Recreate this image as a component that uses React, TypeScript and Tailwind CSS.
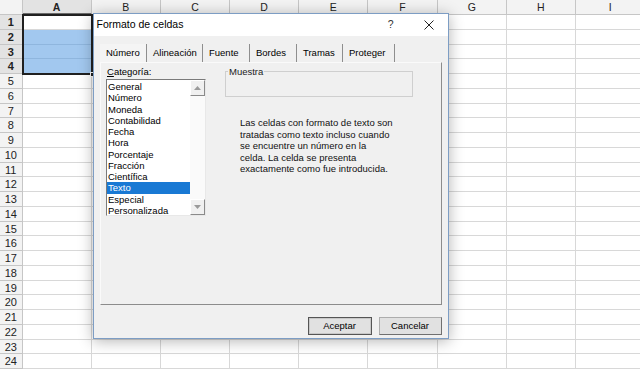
import React from 'react';

const COLS = ['A', 'B', 'C', 'D', 'E', 'F', 'G', 'H', 'I'];
const ROWS = Array.from({ length: 24 }, (_, i) => i + 1);

const CATEGORIES = [
    'General', 'Número', 'Moneda', 'Contabilidad', 'Fecha', 'Hora',
    'Porcentaje', 'Fracción', 'Científica', 'Texto', 'Especial', 'Personalizada'
];

const TABS = [
    { label: 'Número', w: 'w-[47px]' },
    { label: 'Alineación', w: 'w-[56px]' },
    { label: 'Fuente', w: 'w-[47px]' },
    { label: 'Bordes', w: 'w-[47px]' },
    { label: 'Tramas', w: 'w-[46px]' },
    { label: 'Proteger', w: 'w-[52px]' }
];

const Sheet = () => (
    <div className="flex flex-col">
        {/* column headers */}
        <div className="flex h-[15px]">
            <div className="w-[22.5px] shrink-0 bg-[#f3f3f3] border-r border-b border-[#c6c6c6]" />
            {COLS.map((c) => (
                <div
                    key={c}
                    className={`w-[69.2px] shrink-0 text-center text-[10.5px] leading-[14px] text-[#222] border-r border-[#c6c6c6] ${c === 'A' ? 'bg-[#e3e3e3] font-bold border-b-2 border-b-[#6a6a6a]' : 'bg-[#f3f3f3] border-b'}`}
                >
                    {c}
                </div>
            ))}
        </div>
        {ROWS.map((r) => (
            <div key={r} className="flex h-[14.75px]">
                <div
                    className={`w-[22.5px] shrink-0 text-center text-[11px] leading-[14px] text-[#222] border-r border-b border-[#c6c6c6] ${r <= 4 ? 'bg-[#e3e3e3] font-bold' : 'bg-[#f3f3f3]'}`}
                >
                    {r}
                </div>
                {COLS.map((c) => (
                    <div
                        key={c}
                        className={`w-[69.2px] shrink-0 border-r border-b ${c === 'A' && r >= 2 && r <= 4 ? 'bg-[#a2c8ef] border-[#8fb6de]' : 'bg-white border-[#d8d8d8]'}`}
                    />
                ))}
            </div>
        ))}
    </div>
);

const ScrollButton = ({ down }: { down?: boolean }) => (
    <div className="h-[16px] w-[15px] bg-[#f0f0f0] border border-t-white border-l-white border-r-[#8a8a8a] border-b-[#8a8a8a] flex items-center justify-center">
        <svg width="7" height="4" viewBox="0 0 7 4">
            <path d={down ? 'M0 0 L7 0 L3.5 4 Z' : 'M0 4 L7 4 L3.5 0 Z'} fill="#9a9a9a" />
        </svg>
    </div>
);

const FormatDialog = () => (
    <div className="absolute left-[92.5px] top-[13px] w-[356px] h-[326px] bg-[#f0f0f0] border border-[#7d9dc4] shadow-[0_2px_14px_rgba(0,0,0,0.3)] flex flex-col text-black">
        {/* title bar */}
        <div className="h-[22px] bg-white flex items-center pl-[3px] pr-[14px] shrink-0">
            <span className="text-[10.5px]">Formato de celdas</span>
            <div className="ml-auto flex items-center gap-[30px]">
                <span className="text-[10.5px] text-[#333]">?</span>
                <svg width="10" height="10" viewBox="0 0 10 10">
                    <path d="M0.5 0.5 L9.5 9.5 M9.5 0.5 L0.5 9.5" stroke="#222" strokeWidth="1" />
                </svg>
            </div>
        </div>

        <div className="pl-[6.5px] pt-[8px] flex flex-col">
            {/* tabs */}
            <div className="flex h-[18px]">
                {TABS.map((t, i) => (
                    <div
                        key={t.label}
                        className={`${t.w} shrink-0 pl-[6px] text-[9.5px] leading-[18px] border-r border-[#8e8e8e] ${i === 0 ? 'bg-[#f4f4f4]' : ''}`}
                    >
                        {t.label}
                    </div>
                ))}
            </div>

            {/* panel */}
            <div className="w-[342px] h-[243px] border border-t-[#fafafa] border-l-[#fafafa] border-r-[#8c8c8c] border-b-[#8c8c8c] flex pl-[5px] pt-[3px]">
                <div className="flex flex-col">
                    <div className="pl-[1px] text-[9.5px] leading-[12px] h-[13px]">
                        <span className="underline">C</span>ategoría:
                    </div>
                    <div className="w-[100px] h-[137px] bg-white border border-t-[#7a7a7a] border-l-[#7a7a7a] border-r-[#e8e8e8] border-b-[#e8e8e8] flex">
                        <div className="flex-1 pt-[1px]">
                            {CATEGORIES.map((c) => (
                                <div
                                    key={c}
                                    className={`h-[11.25px] pl-[1px] text-[9.5px] leading-[11.25px] ${c === 'Texto' ? 'bg-[#1979d4] text-white' : ''}`}
                                >
                                    {c}
                                </div>
                            ))}
                        </div>
                        <div className="w-[15px] flex flex-col justify-between bg-[#fafafa]">
                            <ScrollButton />
                            <ScrollButton down />
                        </div>
                    </div>
                </div>

                <div className="ml-[19px] flex flex-col">
                    <fieldset className="w-[188px] h-[31px] border border-[#cfcfcf] px-[2px]">
                        <legend className="text-[9.5px] leading-[11px] px-[1px] text-[#222]">Muestra</legend>
                    </fieldset>
                    <p className="mt-[20px] ml-[15px] text-[9.5px] leading-[11.6px] text-[#111]">
                        Las celdas con formato de texto son<br />
                        tratadas como texto incluso cuando<br />
                        se encuentre un número en la<br />
                        celda. La celda se presenta<br />
                        exactamente como fue introducida.
                    </p>
                </div>
            </div>

            {/* buttons */}
            <div className="flex gap-[7px] mt-[12px] pl-[207.5px]">
                <button className="w-[64px] h-[18px] bg-[#e1e1e1] border border-[#555] shadow-[inset_0_0_0_1px_#c8c8c8] text-[9.5px] leading-[16px]">
                    Aceptar
                </button>
                <button className="w-[63px] h-[18px] bg-[#e1e1e1] border border-[#adadad] border-r-[#707070] border-b-[#707070] text-[9.5px] leading-[16px]">
                    Cancelar
                </button>
            </div>
        </div>
    </div>
);

export default function App() {
    return (
        <div className="relative w-[640px] h-[371px] overflow-hidden bg-white font-['Liberation_Sans',Arial,sans-serif]">
            <Sheet />

            {/* selection border A1:A4 */}
            <div className="absolute left-[21.5px] top-[14px] w-[71.5px] h-[61px] border-2 border-[#202020]" />
            <div className="absolute left-[90px] top-[72px] w-[5px] h-[5px] bg-[#202020] border border-white" />

            <FormatDialog />
        </div>
    );
}
